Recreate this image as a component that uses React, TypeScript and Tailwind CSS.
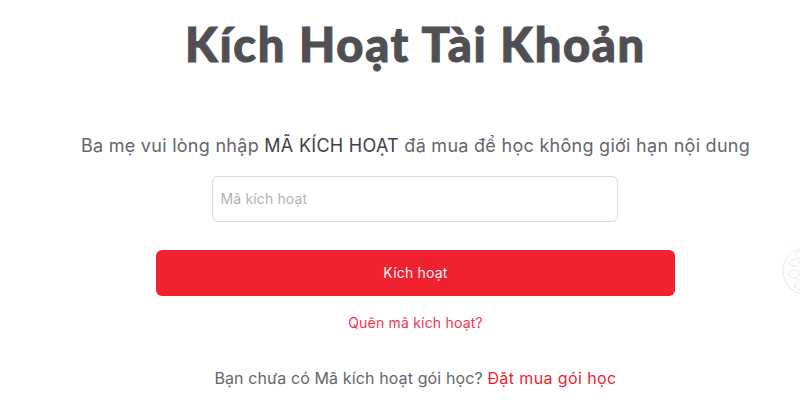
export default function App() {
  return (
    <div className="relative h-[400px] w-[800px] overflow-hidden bg-white font-['Inter','Liberation_Sans',sans-serif]">
      <div className="flex flex-col items-center pl-[31px]">
        <h1 className="mt-[14px] h-[60px] text-[47px] leading-[60px] font-black tracking-[1.7px] text-[#505054] [-webkit-text-stroke:1px_#505054] font-['Lato','Inter',sans-serif]">
          Kích Hoạt Tài Khoản
        </h1>
        <p className="mt-[58px] text-[18px] leading-[28px] tracking-[0.28px] whitespace-nowrap text-[#65666e]">
          Ba mẹ vui lòng nhập <span className="text-[#414148]">MÃ KÍCH HOẠT</span> đã mua để học không giới hạn nội dung
        </p>
        <input
          placeholder="Mã kích hoạt"
          className="mt-[16px] mr-[2px] h-[46px] w-[406px] rounded-md border border-[#dcdcdc] px-2 pb-[2px] text-[14px] tracking-[0.15px] outline-none placeholder:text-[#b3b3b3]"
        />
        <button className="mt-[28px] h-[46px] w-[519px] rounded-md bg-[#f02230] pb-[2px] text-[14px] tracking-[0.2px] text-[#fff5f5]">Kích hoạt</button>
        <a className="mt-[17px] text-[14px] leading-[20px] tracking-[0.2px] text-[#f5344f]">Quên mã kích hoạt?</a>
        <p className="mt-[33px] text-[16px] leading-[24px] tracking-[0.12px] text-[#65666e]">
          Bạn chưa có Mã kích hoạt gói học? <a className="tracking-[0.4px] text-[#f02230]">Đặt mua gói học</a>
        </p>
      </div>
      <svg className="absolute top-[246px] left-[782px]" width="18" height="50" viewBox="0 0 18 50" fill="none" stroke="#fddde0" strokeWidth="1">
        <circle cx="24" cy="25" r="23" />
        <ellipse cx="12" cy="17" rx="5" ry="3.5" />
        <ellipse cx="12" cy="28" rx="5.5" ry="4" />
        <circle cx="18" cy="9" r="4" />
        <circle cx="18" cy="39" r="5" />
      </svg>
    </div>
  );
}
